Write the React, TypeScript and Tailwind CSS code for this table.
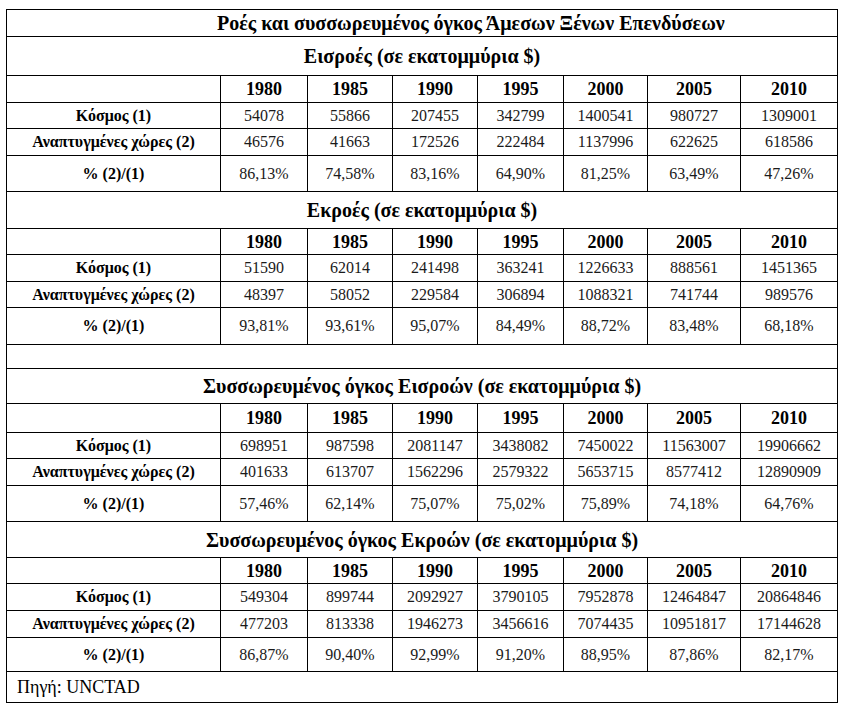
import React from 'react';

// Πίνακας ΑΞΕ: ροές και συσσωρευμένος όγκος (UNCTAD)

type Section = {
  title: string;
  titleH: string;
  yearsH: string;
  rowH: [string, string, string];
  world: string[];
  developed: string[];
  share: string[];
};

const YEARS = ['1980', '1985', '1990', '1995', '2000', '2005', '2010'];

const sections: Section[] = [
  {
    title: 'Εισροές (σε εκατομμύρια $)',
    titleH: 'h-[39px]',
    yearsH: 'h-[27px]',
    rowH: ['h-[26px]', 'h-[27px]', 'h-[36px]'],
    world: ['54078', '55866', '207455', '342799', '1400541', '980727', '1309001'],
    developed: ['46576', '41663', '172526', '222484', '1137996', '622625', '618586'],
    share: ['86,13%', '74,58%', '83,16%', '64,90%', '81,25%', '63,49%', '47,26%'],
  },
  {
    title: 'Εκροές (σε εκατομμύρια $)',
    titleH: 'h-[37px]',
    yearsH: 'h-[26px]',
    rowH: ['h-[27px]', 'h-[26px]', 'h-[37px]'],
    world: ['51590', '62014', '241498', '363241', '1226633', '888561', '1451365'],
    developed: ['48397', '58052', '229584', '306894', '1088321', '741744', '989576'],
    share: ['93,81%', '93,61%', '95,07%', '84,49%', '88,72%', '83,48%', '68,18%'],
  },
  {
    title: 'Συσσωρευμένος όγκος Εισροών (σε εκατομμύρια $)',
    titleH: 'h-[35px]',
    yearsH: 'h-[29px]',
    rowH: ['h-[26px]', 'h-[27px]', 'h-[36px]'],
    world: ['698951', '987598', '2081147', '3438082', '7450022', '11563007', '19906662'],
    developed: ['401633', '613707', '1562296', '2579322', '5653715', '8577412', '12890909'],
    share: ['57,46%', '62,14%', '75,07%', '75,02%', '75,89%', '74,18%', '64,76%'],
  },
  {
    title: 'Συσσωρευμένος όγκος Εκροών (σε εκατομμύρια $)',
    titleH: 'h-[36px]',
    yearsH: 'h-[26px]',
    rowH: ['h-[27px]', 'h-[27px]', 'h-[34px]'],
    world: ['549304', '899744', '2092927', '3790105', '7952878', '12464847', '20864846'],
    developed: ['477203', '813338', '1946273', '3456616', '7074435', '10951817', '17144628'],
    share: ['86,87%', '90,40%', '92,99%', '91,20%', '88,95%', '87,86%', '82,17%'],
  },
];

const serif = "[font-family:'Liberation_Serif','Times_New_Roman',serif]";
const cell = `border border-black p-0 text-center align-middle leading-none ${serif}`;

const DataRow = ({ label, values, h }: { label: string; values: string[]; h: string }) => (
  <tr className={h}>
    <td className={`${cell} font-bold text-[16px]`}>{label}</td>
    {values.map((v, i) => (
      <td key={i} className={`${cell} text-[16px] text-[#1a1a1a]`}>
        {v}
      </td>
    ))}
  </tr>
);

const SectionRows = ({ s, blankBefore }: { s: Section; blankBefore?: boolean }) => (
  <>
    {blankBefore && (
      <tr className="h-[24px]">
        <td colSpan={8} className="border border-black p-0" />
      </tr>
    )}
    <tr className={s.titleH}>
      <td colSpan={8} className={`${cell} font-bold text-[20px]`}>
        {s.title}
      </td>
    </tr>
    <tr className={s.yearsH}>
      <td className={cell} />
      {YEARS.map((y) => (
        <td key={y} className={`${cell} font-bold text-[18px]`}>
          {y}
        </td>
      ))}
    </tr>
    <DataRow label="Κόσμος (1)" values={s.world} h={s.rowH[0]} />
    <DataRow label="Αναπτυγμένες χώρες (2)" values={s.developed} h={s.rowH[1]} />
    <DataRow label="% (2)/(1)" values={s.share} h={s.rowH[2]} />
  </>
);

export default function App() {
  return (
    <div className="w-[848px] h-[706px] bg-white pt-[9px] pl-[6px] text-black">
      <table className={`table-fixed border-collapse w-[831px] ${serif}`}>
        <colgroup>
          <col className="w-[214px]" />
          <col className="w-[87px]" />
          <col className="w-[85px]" />
          <col className="w-[85px]" />
          <col className="w-[86px]" />
          <col className="w-[84px]" />
          <col className="w-[93px]" />
          <col className="w-[97px]" />
        </colgroup>
        <tbody>
          <tr className="h-[27px]">
            <td colSpan={8} className={`border border-black p-0 pl-[210px] text-left align-middle leading-none font-bold text-[20px] ${serif}`}>
              Ροές και συσσωρευμένος όγκος Άμεσων Ξένων Επενδύσεων
            </td>
          </tr>
          {sections.map((s, i) => (
            <SectionRows key={s.title} s={s} blankBefore={i === 2} />
          ))}
          <tr className="h-[31px]">
            <td colSpan={8} className={`border border-black p-0 pl-[10px] text-left align-middle leading-none text-[18px] ${serif}`}>
              Πηγή: UNCTAD
            </td>
          </tr>
        </tbody>
      </table>
    </div>
  );
}
